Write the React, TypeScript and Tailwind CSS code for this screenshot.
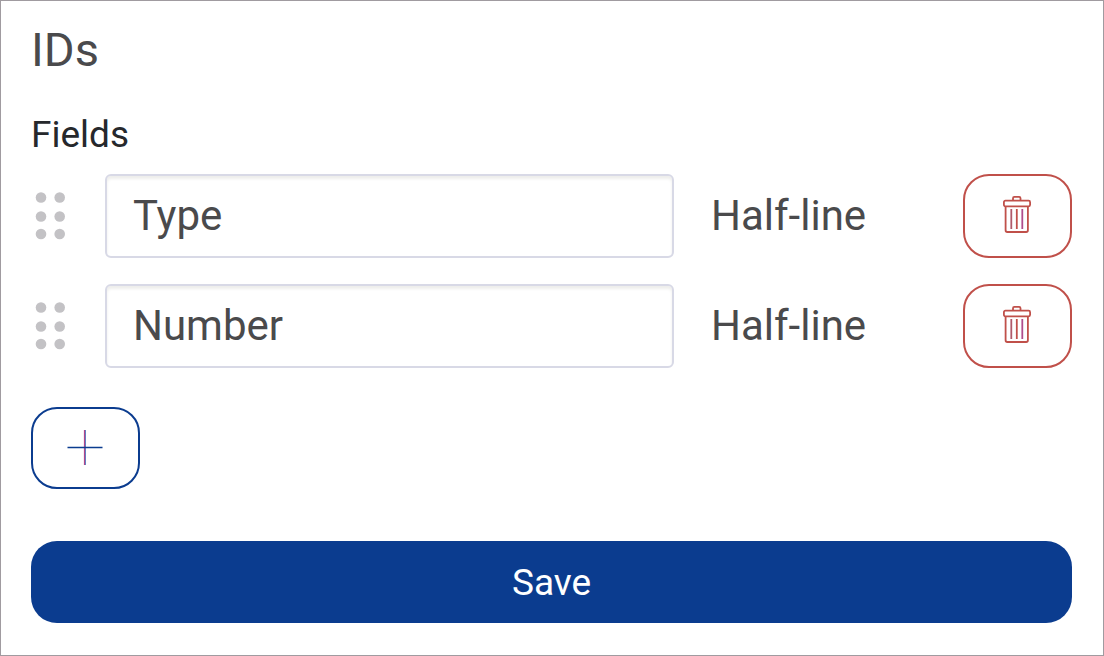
import { useState } from "react";

type Field = {
  id: number;
  name: string;
  width: string;
};

const initialFields: Field[] = [
  { id: 1, name: "Type", width: "Half-line" },
  { id: 2, name: "Number", width: "Half-line" },
];

export default function App() {
  const [fields, setFields] = useState<Field[]>(initialFields);

  function rename(id: number, name: string) {
    setFields(fields.map((f) => (f.id === id ? { ...f, name } : f)));
  }

  function remove(id: number) {
    setFields(fields.filter((f) => f.id !== id));
  }

  function add() {
    setFields([...fields, { id: Date.now(), name: "", width: "Half-line" }]);
  }

  return (
    <form
      onSubmit={(e) => e.preventDefault()}
      className="min-h-screen border border-[#a09ba0] bg-white pt-[21px] pr-[31px] pb-8 pl-[30px] font-['Roboto',sans-serif] text-[#4a4a4c]"
    >
      <h1 className="text-[47px] leading-[56px]">IDs</h1>
      <h2 className="mt-[35px] text-[37px] leading-[44px] text-[#26282c]">Fields</h2>

      <div className="mt-[17px] grid grid-cols-1 gap-[26px]">
        {fields.map((f) => (
          <div key={f.id} className="flex items-center">
            <div className="w-[74px] shrink-0 pl-1">
              <DragHandle />
            </div>
            <input
              aria-label="Field name"
              value={f.name}
              onChange={(e) => rename(f.id, e.target.value)}
              className="h-[84px] min-w-0 flex-1 rounded-md border-2 border-[#d8d9e6] bg-white px-[26px] pb-px text-[42px] shadow-[inset_0_3px_3px_#eeeeec] outline-none focus:border-[#0b3c8f]"
            />
            <span className="w-[289px] shrink-0 pl-[37px] text-[42px] leading-[56px]">{f.width}</span>
            <button
              type="button"
              aria-label="Delete field"
              onClick={() => remove(f.id)}
              className="flex h-[84px] w-[109px] shrink-0 items-center justify-center rounded-[26px] border-2 border-[#c0504a] text-[#c0504a] hover:bg-red-50"
            >
              <TrashIcon />
            </button>
          </div>
        ))}
      </div>

      <button
        type="button"
        aria-label="Add field"
        onClick={add}
        className="mt-[39px] flex h-[82px] w-[109px] items-center justify-center rounded-[26px] border-2 border-[#0b3c8f] text-[#0b3c8f] hover:bg-blue-50"
      >
        <PlusIcon />
      </button>

      <button
        type="submit"
        className="mt-[52px] h-[82px] w-full rounded-[26px] bg-[#0b3c8f] pt-0.5 text-[37px] leading-[44px] text-white"
      >
        Save
      </button>
    </form>
  );
}

function DragHandle() {
  return (
    <svg width="32" height="48" viewBox="0 0 32 48" fill="#c3c2c5" aria-hidden="true">
      {[5.5, 24.5, 42].map((y) => (
        <g key={y}>
          <circle cx="6" cy={y} r="5.3" />
          <circle cx="24.7" cy={y} r="5.3" />
        </g>
      ))}
    </svg>
  );
}

function TrashIcon() {
  return (
    <svg width="29" height="40" viewBox="0 0 29 40" fill="none" stroke="currentColor" strokeWidth="1.8" aria-hidden="true">
      <path d="M10 4.5V2.2Q10 0.9 11.3 0.9H16.2Q17.5 0.9 17.5 2.2V4.5" />
      <rect x="0.9" y="4.7" width="26.2" height="5.6" rx="1.5" />
      <path d="M2.6 10V34.3Q2.6 36 4.3 36H23.2Q24.9 36 24.9 34.3V10" />
      <path d="M8.3 13V33" stroke="#b05a6a" />
      <path d="M13.8 13V33" />
      <path d="M19.3 13V33" stroke="#b04c8c" />
    </svg>
  );
}

function PlusIcon() {
  return (
    <svg width="37" height="36" viewBox="0 0 37 36" aria-hidden="true">
      <path d="M17.5 0V35" stroke="#b0478c" strokeWidth="1.2" />
      <path d="M18.5 0V35" stroke="#3f62b4" strokeWidth="0.8" />
      <path d="M0.5 17.5H35.5" stroke="currentColor" strokeWidth="1.6" />
    </svg>
  );
}
